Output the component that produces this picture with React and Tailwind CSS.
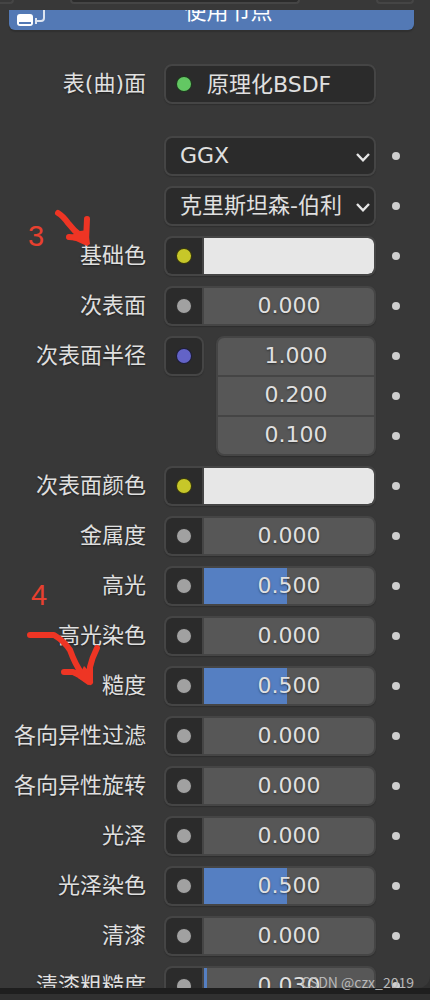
const SOCKETS = {
  gray: "bg-[#a1a1a1]",
  yellow: "bg-[#c7c729]",
  blue: "bg-[#6363c7]",
  green: "bg-[#63c763]",
};

const sliders = [
  { label: "金属度", value: "0.000", fill: 0 },
  { label: "高光", value: "0.500", fill: 49 },
  { label: "高光染色", value: "0.000", fill: 0 },
  { label: "糙度", value: "0.500", fill: 49 },
  { label: "各向异性过滤", value: "0.000", fill: 0 },
  { label: "各向异性旋转", value: "0.000", fill: 0 },
  { label: "光泽", value: "0.000", fill: 0 },
  { label: "光泽染色", value: "0.500", fill: 49 },
  { label: "清漆", value: "0.000", fill: 0 },
  { label: "清漆粗糙度", value: "0.030", fill: 2 },
];

function Socket({ color }) {
  return (
    <span
      className={`block size-4 rounded-full border border-black/70 ${SOCKETS[color]}`}
    />
  );
}

function SocketButton({ color, label }) {
  return (
    <button
      type="button"
      aria-label={`${label} 接口`}
      className="flex w-[38px] shrink-0 items-center justify-center border-r-2 border-[#454545] bg-[#2b2b2b]"
    >
      <Socket color={color} />
    </button>
  );
}

// 右側的關鍵影格圓點
function KeyDot({ label }) {
  return (
    <button
      type="button"
      aria-label={`${label} 关键帧`}
      className="flex h-10 w-10 items-center justify-center"
    >
      <span className="size-2 rounded-full bg-[#cfcfcf]" />
    </button>
  );
}

function Row({ label, htmlFor, children, dots = 1 }) {
  return (
    <div className="grid grid-cols-[146px_minmax(0,1fr)_40px] pr-3.5">
      <label
        htmlFor={htmlFor}
        className="h-10 text-right leading-10 whitespace-nowrap"
      >
        {label}
      </label>
      <div className="ml-[18px] min-w-0">{children}</div>
      <div>
        {Array.from({ length: dots }, (_, i) => (
          <KeyDot key={i} label={`${label || htmlFor} ${i + 1}`} />
        ))}
      </div>
    </div>
  );
}

function Field({ children }) {
  return (
    <div className="flex h-10 overflow-hidden rounded-lg border-2 border-[#454545] bg-[#575757] shadow-[0_1px_1px_#2e2e2e]">
      {children}
    </div>
  );
}

function SliderRow({ label, value, fill }) {
  return (
    <Row label={label} htmlFor={label}>
      <Field>
        <SocketButton color="gray" label={label} />
        <div className="relative min-w-0 flex-1">
          <div
            className="absolute inset-y-0 left-0 bg-[#557fc2]"
            style={{ width: `${fill}%` }}
          />
          <input
            id={label}
            defaultValue={value}
            className="relative h-9 w-full pb-0.5 text-center text-shadow-[0_1px_2px_#00000080]"
          />
        </div>
      </Field>
    </Row>
  );
}

function ColorRow({ label }) {
  return (
    <Row label={label} htmlFor={label}>
      <Field>
        <SocketButton color="yellow" label={label} />
        <button
          id={label}
          type="button"
          className="min-w-0 flex-1 rounded-r-md bg-[#e7e7e7]"
        />
      </Field>
    </Row>
  );
}

function SelectRow({ id, value }) {
  return (
    <Row htmlFor={id}>
      <div className="relative">
        <select
          id={id}
          aria-label={id}
          defaultValue={value}
          className="h-10 w-full appearance-none rounded-lg border-2 border-[#454545] bg-[#2b2b2b] pb-0.5 pl-3.5 shadow-[0_1px_1px_#2e2e2e]"
        >
          <option>{value}</option>
        </select>
        <svg
          className="pointer-events-none absolute top-4 right-1.5"
          width="14"
          height="10"
          fill="none"
          stroke="#e6e6e6"
          strokeWidth="2.4"
        >
          <path d="M1 2L7 8.3L13 2" />
        </svg>
      </div>
    </Row>
  );
}

function RadiusRow() {
  const label = "次表面半径";
  return (
    <Row label={label} htmlFor={label} dots={3}>
      <div className="flex items-start gap-3">
        <button
          type="button"
          aria-label={`${label} 接口`}
          className="flex size-10 shrink-0 items-center justify-center rounded-lg border-2 border-[#454545] bg-[#2b2b2b] shadow-[0_1px_1px_#2e2e2e]"
        >
          <Socket color="blue" />
        </button>
        <div className="flex h-[120px] min-w-0 flex-1 flex-col divide-y-2 divide-[#454545] overflow-hidden rounded-lg border-2 border-[#454545] bg-[#575757] shadow-[0_1px_1px_#2e2e2e]">
          {["1.000", "0.200", "0.100"].map((v, i) => (
            <input
              key={v}
              id={i === 0 ? label : undefined}
              aria-label={`${label} ${i + 1}`}
              defaultValue={v}
              className="block min-h-0 w-full flex-1 pb-0.5 text-center text-shadow-[0_1px_2px_#00000080]"
            />
          ))}
        </div>
      </div>
    </Row>
  );
}

function Annotations() {
  return (
    <svg
      className="pointer-events-none absolute top-0 left-0"
      width="110"
      height="700"
      fill="none"
      stroke="#ee3524"
      strokeWidth="6"
      strokeLinecap="round"
      strokeLinejoin="round"
    >
      <path d="M58 213Q63 216 68 223Q74 231 82 237M87 219L86 241L81 238L69 237" />
      <path
        d="M80 231L88 230L90 244L87 246L76 241L66 238Z"
        fill="#ee3524"
        stroke="none"
      />
      <path d="M30 635H54Q64 641 70 650Q75 664 82 674L90 682M64 672H73Q80 675 90 682M97 648Q92 658 90 667V682" />
      <path
        d="M84 666L90 672L92 683L88 685L78 678Z"
        fill="#ee3524"
        stroke="none"
      />
      <g
        fill="#e8402f"
        stroke="none"
        className="font-['Liberation_Sans',sans-serif] text-[29px]"
      >
        <text x="28" y="246">
          3
        </text>
        <text x="31" y="605">
          4
        </text>
      </g>
    </svg>
  );
}

export default function App() {
  return (
    <div className="relative flex h-screen flex-col overflow-hidden bg-[#303030] font-['DejaVu_Sans','Noto_Sans_CJK_SC',sans-serif] text-[22px] text-[#e0e0e0]">
      {/* 上方面板的底邊 */}
      <div className="flex h-2.5 shrink-0 items-start bg-[#383838]">
        <div className="h-1 w-3.5 rounded-br-lg border-r-2 border-b-2 border-[#454545]" />
        <div className="ml-14 h-1 w-[230px] rounded-b-lg border-2 border-t-0 border-[#454545] bg-[#2b2b2b]" />
        <div className="mr-4 ml-auto h-1 w-[38px] rounded-b-lg border-2 border-t-0 border-[#454545]" />
      </div>

      <main className="min-h-0 flex-1 overflow-hidden rounded-br-xl bg-[#383838] text-shadow-[0_1px_2px_#00000080]">
        <div className="-mt-5 mr-4 ml-[9px]">
          <button
            type="button"
            className="relative block h-10 w-full rounded-md bg-[#5379b5] pt-0.5 pl-[34px] text-center text-white shadow-[0_2px_1px_#303030]"
          >
            <svg
              className="absolute bottom-0 left-0"
              width="44"
              height="30"
              fill="none"
            >
              <rect x="8" y="14" width="16" height="12" rx="3" fill="#fff" />
              <path d="M10 23H22" stroke="#5379b5" strokeWidth="2" />
              <path
                d="M35 8V18Q35 21 32 21H28M27 18V24"
                stroke="#fff"
                strokeWidth="2"
                opacity="0.8"
              />
            </svg>
            使用节点
          </button>
        </div>

        <div className="mt-[34px] grid grid-cols-[146px_minmax(0,1fr)_40px] pr-3.5">
          <label htmlFor="surface" className="h-10 text-right leading-10">
            表(曲)面
          </label>
          <button
            id="surface"
            type="button"
            className="ml-[18px] flex h-10 items-center gap-[15px] rounded-lg border-2 border-[#454545] bg-[#2b2b2b] pl-2.5 text-left whitespace-nowrap shadow-[0_1px_1px_#2e2e2e]"
          >
            <Socket color="green" />
            <span>原理化BSDF</span>
          </button>
        </div>

        <div className="mt-8 flex flex-col gap-2.5">
          <SelectRow id="分布" value="GGX" />
          <SelectRow id="次表面方法" value="克里斯坦森-伯利" />
          <ColorRow label="基础色" />
          <SliderRow label="次表面" value="0.000" fill={0} />
          <RadiusRow />
          <ColorRow label="次表面颜色" />
          {sliders.map((s) => (
            <SliderRow key={s.label} {...s} />
          ))}
        </div>
      </main>

      <footer className="h-3 shrink-0 border-t-[6px] border-[#1e1e1e] bg-[#303030]" />

      <Annotations />
      <p className="absolute right-4 bottom-2 font-['Noto_Sans_CJK_SC',sans-serif] text-sm leading-5 text-[#b8b8b8]">
        CSDN @czx_2019
      </p>
    </div>
  );
}
